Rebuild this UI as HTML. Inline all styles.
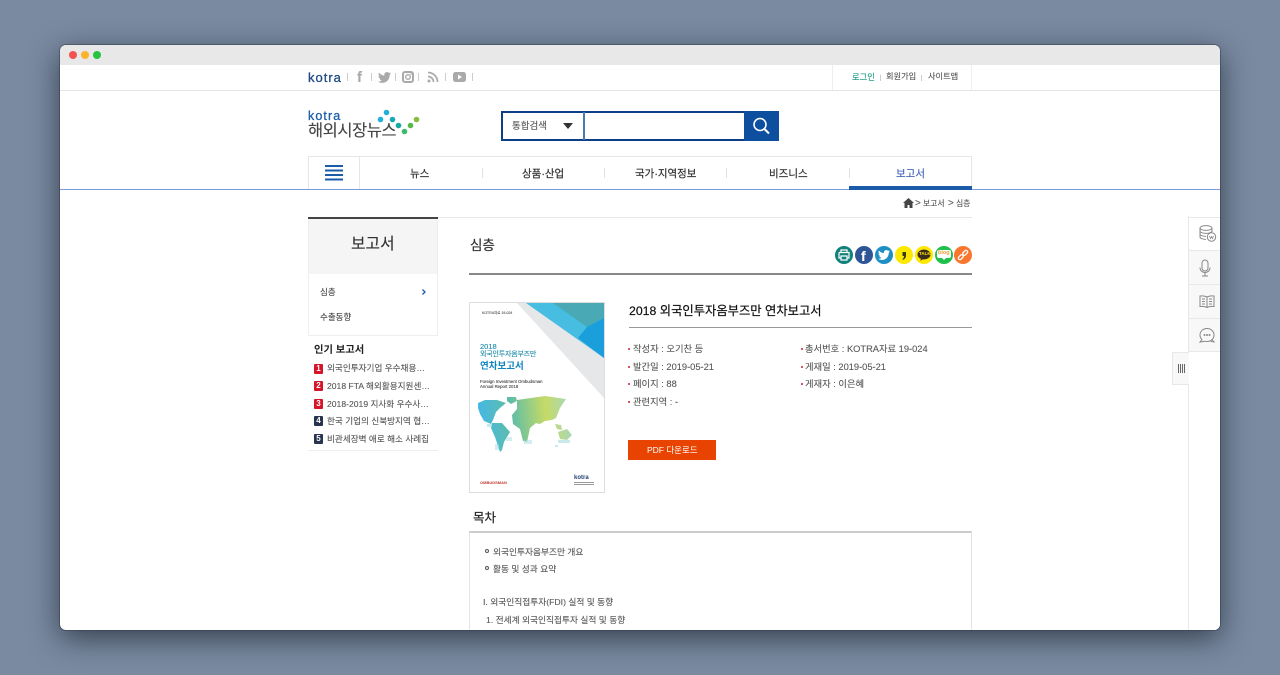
<!DOCTYPE html>
<html lang="ko"><head><meta charset="utf-8"><title>KOTRA 해외시장뉴스</title>
<style>
*{box-sizing:border-box;margin:0;padding:0}
html,body{width:1280px;height:675px;overflow:hidden}
body{background:#7a8aa1;font-family:"Liberation Sans","Noto Sans CJK KR",sans-serif;color:#333;position:relative}
.win{position:absolute;left:60px;top:45px;width:1160px;height:585px;background:#fff;border-radius:6px;overflow:hidden;box-shadow:0 0 0 1px rgba(50,62,78,.5),0 8px 30px 0 rgba(15,22,32,.65)}
.p{position:absolute}
.t{position:absolute;white-space:nowrap;line-height:1;-webkit-text-stroke:.1px currentColor}
svg{position:absolute;display:block;overflow:visible}
</style></head><body>
<div class="win">
<div style="position:absolute;left:-60px;top:-45px;width:1280px;height:675px">
 <div class="p" style="left:60px;top:45px;width:1160px;height:20px;background:#e8e8e8"></div>
 <div class="p" style="left:69px;top:51px;width:8px;height:8px;border-radius:50%;background:#f4534f"></div>
 <div class="p" style="left:81px;top:51px;width:8px;height:8px;border-radius:50%;background:#fbb32c"></div>
 <div class="p" style="left:93px;top:51px;width:8px;height:8px;border-radius:50%;background:#27c23f"></div>

 <!-- top bar -->
 <div class="p" style="left:60px;top:90px;width:1160px;height:1px;background:#e4e4e4"></div>
 <div class="t" style="left:308px;top:71px;font-size:13px;color:#1f4a84;letter-spacing:1px;-webkit-text-stroke:.3px #1f4a84">kotra</div>
 <div class="p" style="left:347px;top:73px;width:1px;height:8px;background:#ccc"></div>
 <div class="t" style="left:357px;top:70px;font-size:15px;font-weight:700;color:#aaa">f</div>
 <div class="p" style="left:371px;top:73px;width:1px;height:8px;background:#ccc"></div>
 <svg style="left:378px;top:72px" width="13" height="11" viewBox="0 0 24 20"><path fill="#aaa" d="M24 2.400a10 10 0 0 1-2.800.8A5 5 0 0 0 23.300.5a10 10 0 0 1-3.100 1.200 4.900 4.900 0 0 0-8.400 4.500A14 14 0 0 1 1.700 1a4.900 4.900 0 0 0 1.500 6.600 5 5 0 0 1-2.200-.6 4.900 4.900 0 0 0 3.900 4.900 5 5 0 0 1-2.200.1 4.900 4.900 0 0 0 4.600 3.400A10 10 0 0 1 0 17.500 14 14 0 0 0 7.500 20c9 0 14-7.500 14-14v-.6A10 10 0 0 0 24 2.400z"/></svg>
 <div class="p" style="left:395px;top:73px;width:1px;height:8px;background:#ccc"></div>
 <svg style="left:402px;top:71px" width="12" height="12" viewBox="0 0 12 12"><rect x="1" y="1" width="10" height="10" rx="2" fill="none" stroke="#aaa" stroke-width="2"/><circle cx="6" cy="6" r="2.300" fill="none" stroke="#aaa" stroke-width="1.400"/><circle cx="9" cy="3" r=".8" fill="#aaa"/></svg>
 <div class="p" style="left:418px;top:73px;width:1px;height:8px;background:#ccc"></div>
 <svg style="left:427px;top:71px" width="12" height="12" viewBox="0 0 12 12"><circle cx="2" cy="10" r="1.500" fill="#aaa"/><path d="M1 5.500a5.500 5.500 0 0 1 5.500 5.500M1 1.500a9.500 9.500 0 0 1 9.500 9.500" fill="none" stroke="#aaa" stroke-width="1.700"/></svg>
 <div class="p" style="left:445px;top:73px;width:1px;height:8px;background:#ccc"></div>
 <svg style="left:453px;top:72px" width="13" height="10" viewBox="0 0 13 10"><rect width="13" height="10" rx="2.500" fill="#aaa"/><path d="M5 2.500v5l4-2.500z" fill="#fff"/></svg>
 <div class="p" style="left:472px;top:73px;width:1px;height:8px;background:#ccc"></div>

 <div class="p" style="left:832px;top:65px;width:140px;height:25px;border-left:1px solid #eee;border-right:1px solid #eee"></div>
 <div class="t" style="left:852px;top:73px;font-size:8.300px;color:#1d9a87">로그인</div>
 <div class="p" style="left:880px;top:75px;width:1px;height:6px;background:#ccc"></div>
 <div class="t" style="left:886px;top:73px;font-size:8.200px;color:#555">회원가입</div>
 <div class="p" style="left:921px;top:75px;width:1px;height:6px;background:#ccc"></div>
 <div class="t" style="left:928px;top:73px;font-size:8.200px;color:#555">사이트맵</div>

 <!-- logo -->
 <div class="t" style="left:308px;top:110px;font-size:12.500px;color:#1f5fa8;letter-spacing:1.100px;-webkit-text-stroke:.3px #1f5fa8">kotra</div>
 <div class="t" style="left:308px;top:123px;font-size:16.500px;color:#444;letter-spacing:-.5px">해외시장뉴스</div>
 <svg style="left:370px;top:105px" width="55" height="35" viewBox="0 0 55 35">
  <circle cx="16.500" cy="7.500" r="2.800" fill="#1fb1d6"/><circle cx="10.500" cy="14.500" r="2.800" fill="#1fb1d6"/><circle cx="22.500" cy="14.500" r="2.800" fill="#17a9b5"/><circle cx="28.500" cy="20.500" r="2.800" fill="#17a8a0"/><circle cx="34.500" cy="26.500" r="2.800" fill="#3db96e"/><circle cx="40.500" cy="20.500" r="2.800" fill="#55b84a"/><circle cx="46.500" cy="14.500" r="2.800" fill="#86bd3c"/>
 </svg>

 <!-- search -->
 <div class="p" style="left:501px;top:111px;width:278px;height:30px;border:2px solid #0c3f86;background:#fff"></div>
 <div class="p" style="left:583px;top:112px;width:2px;height:28px;background:#4a78b3"></div>
 <div class="t" style="left:512px;top:122px;font-size:9.500px;color:#555">통합검색</div>
 <div class="p" style="left:563px;top:123px;width:0;height:0;border-left:5px solid transparent;border-right:5px solid transparent;border-top:6px solid #333"></div>
 <div class="p" style="left:744px;top:111px;width:35px;height:30px;background:#0d4f9e"></div>
 <svg style="left:752px;top:117px" width="19" height="18" viewBox="0 0 19 18"><circle cx="8" cy="7.500" r="6" fill="none" stroke="#fff" stroke-width="1.600"/><path d="M12.500 12l4.500 4.500" stroke="#fff" stroke-width="2" fill="none"/></svg>

 <!-- nav -->
 <div class="p" style="left:60px;top:189px;width:1160px;height:1px;background:#7a9bd6"></div>
 <div class="p" style="left:308px;top:156px;width:664px;height:33px;border:1px solid #e6e6e6;border-bottom:0"></div>
 <div class="p" style="left:359px;top:157px;width:1px;height:32px;background:#e6e6e6"></div>
 <div class="p" style="left:325px;top:165px;width:18px;height:16px;background:repeating-linear-gradient(#1a5ca8 0 2px,#fff 2px 4.500px)"></div>
 <div class="t" style="left:410px;top:169px;font-size:10.500px;color:#333;-webkit-text-stroke:.2px #333">뉴스</div>
 <div class="p" style="left:482px;top:168px;width:1px;height:10px;background:#e2e2e2"></div>
 <div class="t" style="left:522px;top:169px;font-size:10.500px;color:#333;-webkit-text-stroke:.2px #333">상품·산업</div>
 <div class="p" style="left:604px;top:168px;width:1px;height:10px;background:#e2e2e2"></div>
 <div class="t" style="left:635px;top:169px;font-size:10.500px;color:#333;-webkit-text-stroke:.2px #333">국가·지역정보</div>
 <div class="p" style="left:726px;top:168px;width:1px;height:10px;background:#e2e2e2"></div>
 <div class="t" style="left:769px;top:169px;font-size:10.500px;color:#333;-webkit-text-stroke:.2px #333">비즈니스</div>
 <div class="p" style="left:849px;top:168px;width:1px;height:10px;background:#e2e2e2"></div>
 <div class="t" style="left:896px;top:169px;font-size:10.500px;color:#3f5fb5">보고서</div>
 <div class="p" style="left:849px;top:186px;width:123px;height:4px;background:#1a5ca8"></div>

 <!-- breadcrumb -->
 <svg style="left:903px;top:198px" width="11" height="10" viewBox="0 0 11 10"><path d="M5.500 0L0 5h1.500v5h3V7h2v3h3V5H11z" fill="#444"/></svg>
 <div class="t" style="left:915px;top:199px;font-size:10px;color:#555">&gt;</div>
 <div class="t" style="left:923px;top:200px;font-size:7.800px;color:#555">보고서</div>
 <div class="t" style="left:948px;top:199px;font-size:10px;color:#555">&gt;</div>
 <div class="t" style="left:956px;top:200px;font-size:7.800px;color:#555">심층</div>
 <div class="p" style="left:438px;top:217px;width:534px;height:1px;background:#e8e8e8"></div>

 <!-- left col -->
 <div class="p" style="left:308px;top:217px;width:130px;height:119px;border:1px solid #eee;border-top:0"></div>
 <div class="p" style="left:308px;top:217px;width:130px;height:2px;background:#444"></div>
 <div class="p" style="left:309px;top:219px;width:128px;height:55px;background:#f5f5f5"></div>
 <div class="t" style="left:351px;top:237px;font-size:15.800px;color:#333">보고서</div>
 <div class="t" style="left:320px;top:288px;font-size:8.500px;color:#444">심층</div>
 <svg style="left:422px;top:289px" width="4" height="6" viewBox="0 0 4 6"><path d="M.5.500L3 3 .5 5.500" fill="none" stroke="#1a5ca8" stroke-width="1.300"/></svg>
 <div class="t" style="left:320px;top:313px;font-size:8.500px;color:#444">수출동향</div>
 <div class="t" style="left:314px;top:346px;font-size:10.300px;font-weight:700;color:#222;-webkit-text-stroke:0">인기 보고서</div>

 <div class="p" style="left:314px;top:364px;width:9px;height:10px;background:#d6142a;border-radius:1px;color:#fff;font-size:8px;line-height:10px;text-align:center;font-weight:700">1</div>
 <div class="t" style="left:327px;top:364px;font-size:8.600px;color:#555">외국인투자기업 우수채용…</div>
 <div class="p" style="left:314px;top:381px;width:9px;height:10px;background:#d6142a;border-radius:1px;color:#fff;font-size:8px;line-height:10px;text-align:center;font-weight:700">2</div>
 <div class="t" style="left:327px;top:382px;font-size:8.600px;color:#555">2018 FTA 해외활용지원센…</div>
 <div class="p" style="left:314px;top:399px;width:9px;height:10px;background:#d6142a;border-radius:1px;color:#fff;font-size:8px;line-height:10px;text-align:center;font-weight:700">3</div>
 <div class="t" style="left:327px;top:400px;font-size:8.600px;color:#555">2018-2019 지사화 우수사…</div>
 <div class="p" style="left:314px;top:416px;width:9px;height:10px;background:#26344f;border-radius:1px;color:#fff;font-size:8px;line-height:10px;text-align:center;font-weight:700">4</div>
 <div class="t" style="left:327px;top:417px;font-size:8.600px;color:#555">한국 기업의 신북방지역 협…</div>
 <div class="p" style="left:314px;top:434px;width:9px;height:10px;background:#26344f;border-radius:1px;color:#fff;font-size:8px;line-height:10px;text-align:center;font-weight:700">5</div>
 <div class="t" style="left:327px;top:435px;font-size:8.600px;color:#555">비관세장벽 애로 해소 사례집</div>
 <div class="p" style="left:308px;top:450px;width:130px;height:1px;background:#eee"></div>

 <!-- main heading -->
 <div class="t" style="left:470px;top:239px;font-size:13.500px;color:#333;-webkit-text-stroke:.2px #333">심층</div>
 <div class="p" style="left:469px;top:273px;width:503px;height:2px;background:#888"></div>

 <!-- share icons -->
 <div class="p" style="left:835px;top:246px;width:18px;height:18px;border-radius:50%;background:#12807b"></div>
 <svg style="left:838px;top:249px" width="12" height="12" viewBox="0 0 12 12"><path d="M3 3V1h6v2M1 3.500h10V9H9M3 9H1V3.500M3 7h6v4H3z" fill="none" stroke="#fff" stroke-width="1.200"/></svg>
 <div class="p" style="left:855px;top:246px;width:18px;height:18px;border-radius:50%;background:#2f5597"></div>
 <div class="t" style="left:861px;top:249px;font-size:14px;font-weight:700;color:#fff">f</div>
 <div class="p" style="left:875px;top:246px;width:18px;height:18px;border-radius:50%;background:#1d8fc4"></div>
 <svg style="left:878px;top:250px" width="12" height="10" viewBox="0 0 24 20"><path fill="#fff" d="M24 2.400a10 10 0 0 1-2.800.8A5 5 0 0 0 23.300.5a10 10 0 0 1-3.100 1.200 4.900 4.900 0 0 0-8.400 4.500A14 14 0 0 1 1.700 1a4.900 4.900 0 0 0 1.500 6.600 5 5 0 0 1-2.200-.6 4.900 4.900 0 0 0 3.900 4.900 5 5 0 0 1-2.200.1 4.900 4.900 0 0 0 4.600 3.400A10 10 0 0 1 0 17.500 14 14 0 0 0 7.500 20c9 0 14-7.500 14-14v-.6A10 10 0 0 0 24 2.400z"/></svg>
 <div class="p" style="left:895px;top:246px;width:18px;height:18px;border-radius:50%;background:#fde800"></div>
 <svg style="left:901px;top:250px" width="6" height="11" viewBox="0 0 6 11"><path d="M1.500 2h3.500v3.500Q5 8.500 2 10L1.500 9Q3 8 3 6H1.500z" fill="#3a3a1a"/></svg>
 <div class="p" style="left:915px;top:246px;width:18px;height:18px;border-radius:50%;background:#fde800"></div>
 <svg style="left:917px;top:249px" width="14" height="13" viewBox="0 0 14 13"><ellipse cx="7" cy="5.500" rx="6.500" ry="5" fill="#3b2b1d"/><path d="M4 9l-.5 3 3-2.500z" fill="#3b2b1d"/></svg>
 <div class="t" style="left:919px;top:252px;font-size:4.500px;font-weight:700;color:#fde800;-webkit-text-stroke:0">TALK</div>
 <div class="p" style="left:935px;top:246px;width:18px;height:18px;border-radius:50%;background:#1fc04b"></div>
 <div class="p" style="left:937px;top:250px;width:14px;height:8px;background:#fff;border-radius:2px"></div>
 <div class="t" style="left:938px;top:251px;font-size:5.500px;font-weight:700;color:#e8a33c;-webkit-text-stroke:0">blog</div>
 <div class="p" style="left:942px;top:258px;width:0;height:0;border-left:2px solid transparent;border-right:2px solid transparent;border-top:2px solid #fff"></div>
 <div class="p" style="left:954px;top:246px;width:18px;height:18px;border-radius:50%;background:#f9762e"></div>
 <svg style="left:957px;top:249px" width="12" height="12" viewBox="0 0 12 12"><g fill="none" stroke="#fff" stroke-width="1.300"><rect x="-2.800" y="-1.600" width="5.600" height="3.200" rx="1.600" transform="translate(3.800 8.200) rotate(-45)"/><rect x="-2.800" y="-1.600" width="5.600" height="3.200" rx="1.600" transform="translate(8.200 3.800) rotate(-45)"/></g></svg>

 <!-- cover -->
 <div class="p" style="left:469px;top:302px;width:136px;height:191px;border:1px solid #ddd;background:#fff;overflow:hidden">
  <div class="p" style="left:0;top:0;width:134px;height:189px;filter:blur(.35px)">
  <svg style="left:0;top:0" width="134" height="189" viewBox="470 303 134 189">
   <defs>
    <linearGradient id="m" gradientUnits="userSpaceOnUse" x1="478" x2="572" y1="420" y2="410"><stop offset="0" stop-color="#45b8e6"/><stop offset=".35" stop-color="#5dbda8"/><stop offset=".72" stop-color="#c6da66"/><stop offset="1" stop-color="#a7d8c0"/></linearGradient>
   </defs>
   <polygon points="517,303 604,303 604,398" fill="#e6e7e8"/>
   <polygon points="526,303 604,303 604,358" fill="#47bde2"/>
   <polygon points="553,303 604,303 604,318 587,327" fill="#49a9b4"/>
   <polygon points="587,327 604,318 604,358 578,338" fill="#1a9fdc"/>
   <g fill="url(#m)">
    <path d="M478 403L485 400 497 400 506 403 500 408 496 412 493 420 491 424 484 421 480 414 478 408Z"/>
    <path d="M507 397l9 0 1 4-6 3-4-3z"/>
    <path d="M492 423l10 0 8 9-6 10-2 8-2 2-3-9-2-6-4-9z"/>
    <path d="M512 415L517 409 530 412 536 423 530 428 527 442 523 441 520 429 513 424Z"/>
    <path d="M517 400L545 396 566 399 560 408 556 418 552 420 545 421 540 424 535 423 530 416 517 412Z"/>
    <path d="M555 424l6 1 1 5-5-1z"/>
    <path d="M558 432l9-3 5 6-5 5-7-1z"/>
   </g>
   <g fill="#a7dbe2">
    <rect x="487" y="424" width="5" height="3" opacity=".6"/><rect x="495" y="444" width="4" height="6" opacity=".5"/>
    <rect x="506" y="437" width="6" height="4" opacity=".5"/><rect x="524" y="440" width="8" height="4" opacity=".5"/>
    <rect x="558" y="440" width="12" height="3" opacity=".6"/><rect x="555" y="445" width="3" height="2" opacity=".6"/>
   </g>
  </svg>
  <div class="t" style="left:12px;top:9px;font-size:3.500px;color:#555">KOTRA자료 19-024</div>
  <div class="t" style="left:10px;top:39.500px;font-size:7.500px;color:#1687a8">2018</div>
  <div class="t" style="left:10px;top:48px;font-size:7px;color:#1687a8;letter-spacing:-.2px">외국인투자옴부즈만</div>
  <div class="t" style="left:10px;top:59px;font-size:9.500px;font-weight:700;color:#0f85c2;-webkit-text-stroke:0">연차보고서</div>
  <div class="t" style="left:10px;top:77px;font-size:4.300px;color:#444">Foreign Investment Ombudsman</div>
  <div class="t" style="left:10px;top:82px;font-size:4.300px;color:#444">Annual Report 2018</div>
  <div class="t" style="left:10px;top:178px;font-size:4px;font-weight:700;color:#c0392b;-webkit-text-stroke:0">OMBUDSMAN</div>
  <div class="t" style="left:104px;top:172px;font-size:6px;font-weight:700;color:#1f3f74;-webkit-text-stroke:0">kotra</div>
  <div class="p" style="left:104px;top:179px;width:20px;height:4px;background:repeating-linear-gradient(#999 0 1px,#fff 1px 2px)"></div>
  </div>
 </div>

 <!-- detail -->
 <div class="t" style="left:629px;top:305px;font-size:12.300px;color:#111;-webkit-text-stroke:.2px #111">2018 외국인투자옴부즈만 연차보고서</div>
 <div class="p" style="left:629px;top:327px;width:343px;height:1px;background:#999"></div>

 <div class="p" style="left:628px;top:348px;width:2px;height:2px;background:#c9222f;border-radius:50%"></div>
 <div class="t" style="left:633px;top:345px;font-size:9.300px;color:#555">작성자 : 오기찬 등</div>
 <div class="p" style="left:628px;top:366px;width:2px;height:2px;background:#c9222f;border-radius:50%"></div>
 <div class="t" style="left:633px;top:363px;font-size:9.300px;color:#555">발간일 : 2019-05-21</div>
 <div class="p" style="left:628px;top:383px;width:2px;height:2px;background:#c9222f;border-radius:50%"></div>
 <div class="t" style="left:633px;top:380px;font-size:9.300px;color:#555">페이지 : 88</div>
 <div class="p" style="left:628px;top:401px;width:2px;height:2px;background:#c9222f;border-radius:50%"></div>
 <div class="t" style="left:633px;top:398px;font-size:9.300px;color:#555">관련지역 : -</div>

 <div class="p" style="left:801px;top:348px;width:2px;height:2px;background:#c9222f;border-radius:50%"></div>
 <div class="t" style="left:805px;top:345px;font-size:9.300px;color:#555">총서번호 : KOTRA자료 19-024</div>
 <div class="p" style="left:801px;top:366px;width:2px;height:2px;background:#c9222f;border-radius:50%"></div>
 <div class="t" style="left:805px;top:363px;font-size:9.300px;color:#555">게재일 : 2019-05-21</div>
 <div class="p" style="left:801px;top:383px;width:2px;height:2px;background:#c9222f;border-radius:50%"></div>
 <div class="t" style="left:805px;top:380px;font-size:9.300px;color:#555">게재자 : 이은혜</div>

 <div class="p" style="left:628px;top:440px;width:88px;height:20px;background:#e84300"></div>
 <div class="t" style="left:647px;top:446px;font-size:8.500px;color:#fff;-webkit-text-stroke:0">PDF 다운로드</div>

 <!-- toc -->
 <div class="t" style="left:473px;top:512px;font-size:12.500px;color:#222;-webkit-text-stroke:.2px #222">목차</div>
 <div class="p" style="left:469px;top:531px;width:503px;height:110px;border:1px solid #e4e4e4;border-top:2px solid #ccc"></div>
 <div class="p" style="left:485px;top:549px;width:4px;height:4px;border:1px solid #555;border-radius:50%"></div>
 <div class="t" style="left:493px;top:548px;font-size:8.700px;color:#555">외국인투자옴부즈만 개요</div>
 <div class="p" style="left:485px;top:566px;width:4px;height:4px;border:1px solid #555;border-radius:50%"></div>
 <div class="t" style="left:493px;top:565px;font-size:8.700px;color:#555">활동 및 성과 요약</div>
 <div class="t" style="left:483px;top:598px;font-size:8.700px;color:#555">I. 외국인직접투자(FDI) 실적 및 동향</div>
 <div class="t" style="left:486px;top:616px;font-size:8.700px;color:#555">1. 전세계 외국인직접투자 실적 및 동향</div>

 <!-- side panel -->
 <div class="p" style="left:1188px;top:216px;width:32px;height:420px;background:#fff;border-left:1px solid #e8e8e8"></div>
 <div class="p" style="left:1189px;top:217px;width:31px;height:34px;background:#fff;border-top:1px solid #e8e8e8;border-bottom:1px solid #e8e8e8"></div>
 <div class="p" style="left:1189px;top:251px;width:31px;height:34px;background:#f8f8f8;border-bottom:1px solid #e8e8e8"></div>
 <div class="p" style="left:1189px;top:285px;width:31px;height:34px;background:#f8f8f8;border-bottom:1px solid #e8e8e8"></div>
 <div class="p" style="left:1189px;top:319px;width:31px;height:33px;background:#f8f8f8;border-bottom:1px solid #e8e8e8"></div>
 <svg style="left:1199px;top:225px" width="18" height="18" viewBox="0 0 18 18" fill="none" stroke="#888" stroke-width="1"><ellipse cx="7" cy="3" rx="6" ry="2.400"/><path d="M1 3v9c0 1.300 2.700 2.400 6 2.400M13 3v4M1 6c0 1.300 2.700 2.400 6 2.400s6-1.100 6-2.400M1 9c0 1.300 2.700 2.400 6 2.400"/><circle cx="12.500" cy="12" r="4.200" fill="#fff"/><path d="M10.500 11l1 2.500 1-2 1 2 1-2.500" stroke-width=".8"/></svg>
 <svg style="left:1199px;top:259px" width="12" height="18" viewBox="0 0 12 18" fill="none" stroke="#888" stroke-width="1"><rect x="3" y="1" width="6" height="11" rx="3"/><path d="M1 8.500c0 3 2.200 5 5 5s5-2 5-5M6 13.500V17M3 17h6"/></svg>
 <svg style="left:1199px;top:295px" width="16" height="14" viewBox="0 0 16 14" fill="none" stroke="#888" stroke-width="1"><path d="M8 2Q5 .5 1 1v10.500q4-.5 7 1 3-1.500 7-1V1Q11 .5 8 2zM8 2v10.500M3 4h3M3 6.500h3M3 9h3M10 4h3M10 6.500h3M10 9h3"/></svg>
 <svg style="left:1199px;top:327px" width="16" height="16" viewBox="0 0 16 16" fill="none" stroke="#888" stroke-width="1"><path d="M3 12.500L1 15l5-.8Q7 14.500 8 14.500c4 0 7-2.700 7-6.500S12 1.500 8 1.500 1 4.500 1 8q0 2.800 2 4.500zM13 12.500l2 2.500-3.500-.7"/><circle cx="5.500" cy="8" r=".5"/><circle cx="8" cy="8" r=".5"/><circle cx="10.500" cy="8" r=".5"/></svg>

 <div class="p" style="left:1172px;top:352px;width:17px;height:33px;background:#f8f8f8;border:1px solid #e8e8e8;border-right:0"></div>
 <div class="p" style="left:1178px;top:364px;width:1px;height:9px;background:#666"></div>
 <div class="p" style="left:1180px;top:364px;width:1px;height:9px;background:#666"></div>
 <div class="p" style="left:1182px;top:364px;width:1px;height:9px;background:#666"></div>
 <div class="p" style="left:1184px;top:364px;width:1px;height:9px;background:#666"></div>
</div>
</div>
</body></html>
